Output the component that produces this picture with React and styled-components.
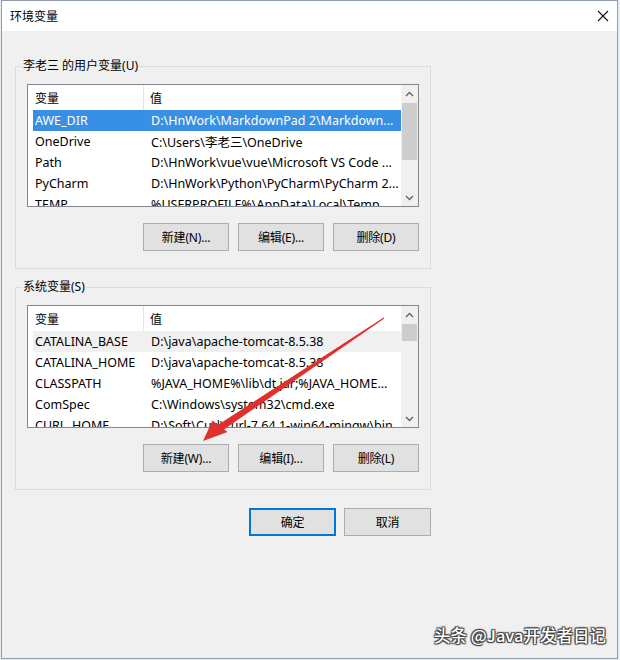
import React from "react";
import styled, { createGlobalStyle } from "styled-components";

const Global = createGlobalStyle`
  html, body { margin: 0; padding: 0; background: #e9eef3; }
  body { font-family: "Noto Sans", "Noto Sans CJK SC", sans-serif; font-size: 12px; color: #000; }
  * { box-sizing: border-box; }
`;

const Window = styled.div`
  position: relative;
  margin-left: 1px;
  width: 617px;
  height: 659px;
  border: 1px solid #8e9cab;
  background: #f0f0f0;
  display: flex;
  flex-direction: column;
`;

const TitleBar = styled.div`
  height: 30px;
  flex: none;
  background: #fff;
  display: flex;
  align-items: center;
  justify-content: space-between;
  padding: 0 8px 0 8px;
  font-size: 12px;
`;

const Close = styled.svg`
  width: 12px;
  height: 12px;
`;

const Body = styled.div`
  padding: 27px 0 0 13px;
  display: flex;
  flex-direction: column;
`;

const Group = styled.fieldset`
  margin: ${(p) => p.$mt || 0}px 0 0 0;
  width: 416px;
  border: 1px solid #dcdcdc;
  padding: 10px 11px 17px 11px;
  min-width: 0;
`;

const Legend = styled.legend`
  padding: 0 1px;
  margin-left: -5px;
  line-height: 16px;
  font-size: 12px;
  color: #000;
`;

const List = styled.div`
  height: 123px;
  border: 1px solid #828790;
  background: #fff;
  display: grid;
  grid-template-columns: 1fr 17px;
  overflow: hidden;
`;

const ListArea = styled.div`
  overflow: hidden;
  display: flex;
  flex-direction: column;
`;

const Header = styled.div`
  height: 25px;
  flex: none;
  display: grid;
  grid-template-columns: 116px 1fr;
  align-items: stretch;
`;

const HeadCell = styled.div`
  display: flex;
  align-items: center;
  padding-left: ${(p) => (p.$first ? 7 : 6)}px;
  border-right: ${(p) => (p.$first ? "1px solid #e5e5e5" : "none")};
`;

const Row = styled.div`
  height: 21px;
  flex: none;
  margin-left: 5px;
  display: grid;
  grid-template-columns: 118px 1fr;
  align-items: center;
  white-space: nowrap;
  background: ${(p) => (p.$state === "sel" ? "#3790e3" : p.$state === "hover" ? "#f0f0f0" : "transparent")};
  color: ${(p) => (p.$state === "sel" ? "#fff" : "#000")};
`;

const Cell = styled.span`
  overflow: hidden;
  padding-left: ${(p) => (p.$first ? 2 : 0)}px;
  font-size: 12.5px;
`;

const Scroll = styled.div`
  background: #f0f0f0;
  display: flex;
  flex-direction: column;
`;

const ArrowBtn = styled.div`
  height: 17px;
  flex: none;
  display: flex;
  align-items: center;
  justify-content: center;
`;

const Track = styled.div`
  flex: 1;
  display: flex;
  flex-direction: column;
`;

const Thumb = styled.div`
  margin: ${(p) => p.$top}px 1px 0 1px;
  height: ${(p) => p.$h}px;
  background: #cdcdcd;
`;

const Buttons = styled.div`
  display: flex;
  justify-content: flex-end;
  gap: ${(p) => p.$gap || 9}px;
  margin-top: ${(p) => p.$mt || 16}px;
  width: ${(p) => (p.$w ? p.$w + "px" : "auto")};
`;

const Button = styled.button`
  width: ${(p) => p.$w || 86}px;
  height: 28px;
  background: #e1e1e1;
  border: ${(p) => (p.$default ? "2px solid #0078d7" : "1px solid #adadad")};
  font-family: "Noto Sans", "Noto Sans CJK SC", sans-serif;
  font-size: 12px;
  color: #000;
  padding: 0;
  display: flex;
  align-items: center;
  justify-content: center;
  letter-spacing: -0.2px;
`;

const Overlay = styled.svg`
  position: absolute;
  left: -2px;
  top: -1px;
  width: 620px;
  height: 660px;
  pointer-events: none;
`;

const Watermark = styled.div`
  position: absolute;
  right: 11px;
  bottom: 11px;
  font-family: "Noto Sans CJK SC", sans-serif;
  font-size: 16.5px;
  font-weight: 500;
  color: #fff;
  text-shadow: 0 0 1px #222, 1px 1px 1px #444, -1px -1px 1px #444, 1px -1px 1px #444, -1px 1px 1px #444;
`;

const Chevron = ({ down }) => (
  <svg width="9" height="6" viewBox="0 0 9 6">
    <polyline
      points={down ? "1,1 4.5,4.5 8,1" : "1,5 4.5,1.5 8,5"}
      fill="none"
      stroke="#606060"
      strokeWidth="1.3"
    />
  </svg>
);

const VarList = ({ rows, thumbTop, thumbH }) => (
  <List>
    <ListArea>
      <Header>
        <HeadCell $first>变量</HeadCell>
        <HeadCell>值</HeadCell>
      </Header>
      {rows.map(([k, v, s]) => (
        <Row key={k} $state={s}>
          <Cell $first>{k}</Cell>
          <Cell>{v}</Cell>
        </Row>
      ))}
    </ListArea>
    <Scroll>
      <ArrowBtn>
        <Chevron />
      </ArrowBtn>
      <Track>
        <Thumb $top={thumbTop} $h={thumbH} />
      </Track>
      <ArrowBtn>
        <Chevron down />
      </ArrowBtn>
    </Scroll>
  </List>
);

const userRows = [
  ["AWE_DIR", "D:\\HnWork\\MarkdownPad 2\\Markdown...", "sel"],
  ["OneDrive", "C:\\Users\\李老三\\OneDrive"],
  ["Path", "D:\\HnWork\\vue\\vue\\Microsoft VS Code ..."],
  ["PyCharm", "D:\\HnWork\\Python\\PyCharm\\PyCharm 2..."],
  ["TEMP", "%USERPROFILE%\\AppData\\Local\\Temp"],
];

const sysRows = [
  ["CATALINA_BASE", "D:\\java\\apache-tomcat-8.5.38", "hover"],
  ["CATALINA_HOME", "D:\\java\\apache-tomcat-8.5.38"],
  ["CLASSPATH", "%JAVA_HOME%\\lib\\dt.jar;%JAVA_HOME..."],
  ["ComSpec", "C:\\Windows\\system32\\cmd.exe"],
  ["CURL_HOME", "D:\\Soft\\Curl\\curl-7.64.1-win64-mingw\\bin"],
];

export default function App() {
  return (
    <>
      <Global />
      <Window>
        <TitleBar>
          <span>环境变量</span>
          <Close viewBox="0 0 12 12">
            <path d="M1 1 L11 11 M11 1 L1 11" stroke="#111" strokeWidth="1.1" />
          </Close>
        </TitleBar>
        <Body>
          <Group>
            <Legend>李老三 的用户变量(U)</Legend>
            <VarList rows={userRows} thumbTop={1} thumbH={57} />
            <Buttons>
              <Button>新建(N)...</Button>
              <Button>编辑(E)...</Button>
              <Button>删除(D)</Button>
            </Buttons>
          </Group>
          <Group $mt={10}>
            <Legend>系统变量(S)</Legend>
            <VarList rows={sysRows} thumbTop={1} thumbH={17} />
            <Buttons>
              <Button>新建(W)...</Button>
              <Button>编辑(I)...</Button>
              <Button>删除(L)</Button>
            </Buttons>
          </Group>
          <Buttons $w={416} $gap={8} $mt={18}>
            <Button $w={87} $default>确定</Button>
            <Button $w={87}>取消</Button>
          </Buttons>
        </Body>
        <Overlay viewBox="0 0 620 660">
          <polygon points="384.3,318.4 222.5,430.6 218.5,424.6 383.7,317.6" fill="#e0302c" />
          <polygon points="203,441 212.5,420.5 227.5,432" fill="#e0302c" />
        </Overlay>
        <Watermark>头条 @Java开发者日记</Watermark>
      </Window>
    </>
  );
}
